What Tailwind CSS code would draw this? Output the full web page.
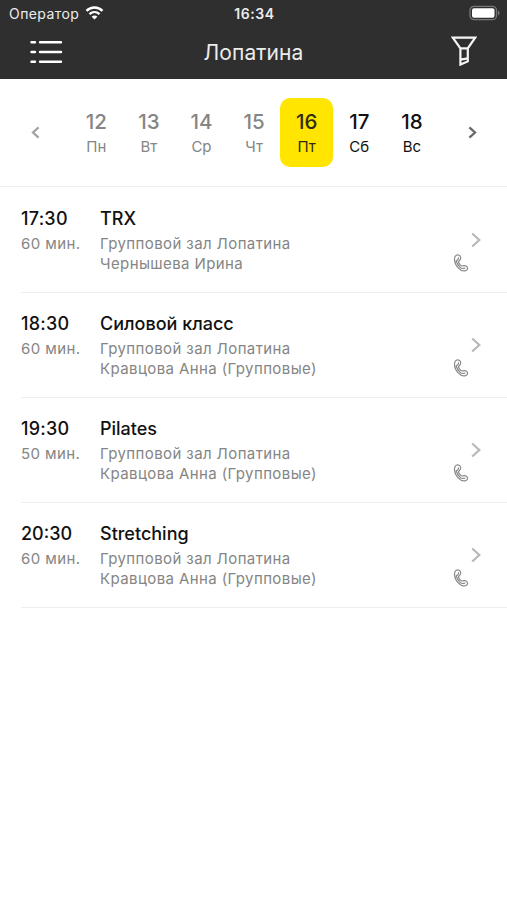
<!DOCTYPE html>
<html lang="ru">
<head>
    <meta charset="UTF-8">
    <meta name="viewport" content="width=device-width, initial-scale=1.0">
    <title>Лопатина</title>
    <script src="https://cdn.jsdelivr.net/npm/@tailwindcss/browser@4"></script>
</head>
<body class="bg-white font-['Inter',sans-serif] h-[900px] overflow-hidden">

    <!-- Shared icons -->
    <svg class="hidden">
        <symbol id="chevron" viewBox="0 0 10 16">
            <path d="M1.2 1.5 8.3 8 1.2 14.5" fill="none" stroke="currentColor" stroke-width="2.2"/>
        </symbol>
        <symbol id="chevron-bold" viewBox="0 0 9 13">
            <path d="M1.4 1.4 7 6.5 1.4 11.6" fill="none" stroke="currentColor" stroke-width="2.3"/>
        </symbol>
        <symbol id="phone" viewBox="0 0 16 18">
            <path d="M3.2 1.3C5.2.2 7.6 1.6 7.7 3.8 7.8 5.4 6.9 6.3 6 7 5.3 7.6 5.5 8.4 6.1 9.3L7.5 11.1C8.2 11.9 8.9 12.2 9.8 11.9 11.6 11.3 13.5 11.8 14.3 13.2 15 14.5 14.3 16 12.6 16.6 10 17.4 7.3 16.2 5.2 13.9 2.9 11.4 1.6 8.4 1.5 5.4 1.4 3.4 2 2 3.2 1.3ZM3 6.6C5 6.3 5.8 5 5.3 3.4M3.2 7C4 9.6 5.4 11.8 7.4 13.6 8.6 14.8 10.6 14.6 12.3 14" fill="none" stroke="currentColor" stroke-width="1.2"/>
        </symbol>
    </svg>

    <!-- Header -->
    <header class="h-[79px] bg-[#2f2f2f] text-[#ececec]">
        <div class="grid grid-cols-3 items-center h-[28px] pl-[9px] pr-[7px]">
            <div class="flex items-center gap-[6px]">
                <span class="text-[14px] tracking-[0.42px] -mt-[2px]">Оператор</span>
                <svg class="w-[19px] h-[14px] -mt-[2px] text-white" viewBox="0 0 18 14" fill="none" stroke="currentColor" stroke-width="2.4">
                    <path d="M1 4.8C5.6.4 12.4.4 17 4.8"/>
                    <path d="M4 8.1c2.9-2.7 7.1-2.7 10 0"/>
                    <path d="M9 13.6 6.1 10.7c1.6-1.5 4.2-1.5 5.8 0Z" fill="currentColor" stroke="none"/>
                </svg>
            </div>
            <span class="text-[14px] font-semibold text-center tracking-[0.6px] -mt-[2px]">16:34</span>
            <svg class="w-[31px] h-[16px] -mt-[2px] justify-self-end" viewBox="0 0 31 16">
                <rect x="1" y="1.3" width="26.5" height="13.4" rx="4" fill="none" stroke="#777" stroke-width="1.3"/>
                <rect x="3" y="3.2" width="22.5" height="9.6" rx="2" fill="#fff"/>
                <path d="M29 5.5v5c2-.9 2-4.1 0-5Z" fill="#777"/>
            </svg>
        </div>
        <div class="grid grid-cols-3 items-center h-[48px] pl-[30px] pr-[30px]">
            <svg class="w-[33px] h-[24px]" viewBox="0 0 33 24" stroke="#fff" stroke-width="2.4" stroke-linecap="round">
                <path d="M1.5 2.2H5M10 2.2H31M1.5 12H5M10 12H31M1.5 21.8H5M10 21.8H31"/>
            </svg>
            <h1 class="text-[21px] text-center whitespace-nowrap pt-px tracking-[0.1px]">Лопатина</h1>
            <svg class="w-[26px] h-[30px] -mt-[2px] justify-self-end" viewBox="0 0 26 30" fill="none" stroke="#f5f5f5" stroke-width="2.2">
                <path d="M1.8 1.6H24.2L16.8 12.4V25.4L9.4 28.6V12.4ZM9.4 12.4H16.8M9.4 23.6 16.8 22.4"/>
            </svg>
        </div>
    </header>

    <!-- Week picker -->
    <nav class="flex items-center h-[108px] pl-[31px] pr-[30px] border-b border-[#efefef]">
        <button class="w-[39px] text-[#a3a3a3]">
            <svg class="w-[9px] h-[13px] rotate-180"><use href="#chevron-bold"/></svg>
        </button>
        <ul class="flex flex-1 text-center text-[#858585]">
            <li class="w-[52.6px] h-[69px] pt-[10px]">
                <div class="text-[20.5px] leading-[27px] font-medium">12</div>
                <div class="text-[15px] leading-[24px]">Пн</div>
            </li>
            <li class="w-[52.6px] h-[69px] pt-[10px]">
                <div class="text-[20.5px] leading-[27px] font-medium">13</div>
                <div class="text-[15px] leading-[24px]">Вт</div>
            </li>
            <li class="w-[52.6px] h-[69px] pt-[10px]">
                <div class="text-[20.5px] leading-[27px] font-medium">14</div>
                <div class="text-[15px] leading-[24px]">Ср</div>
            </li>
            <li class="w-[52.6px] h-[69px] pt-[10px]">
                <div class="text-[20.5px] leading-[27px] font-medium">15</div>
                <div class="text-[15px] leading-[24px]">Чт</div>
            </li>
            <li class="w-[52.6px] h-[69px] pt-[10px] rounded-[10px] bg-[#ffe500] text-[#2e2b12]">
                <div class="text-[20.5px] leading-[27px] font-medium">16</div>
                <div class="text-[15px] leading-[24px]">Пт</div>
            </li>
            <li class="w-[52.6px] h-[69px] pt-[10px] text-[#111]">
                <div class="text-[20.5px] leading-[27px] font-medium">17</div>
                <div class="text-[15px] leading-[24px]">Сб</div>
            </li>
            <li class="w-[52.6px] h-[69px] pt-[10px] text-[#111]">
                <div class="text-[20.5px] leading-[27px] font-medium">18</div>
                <div class="text-[15px] leading-[24px]">Вс</div>
            </li>
        </ul>
        <button class="text-[#686868]">
            <svg class="w-[9px] h-[13px]"><use href="#chevron-bold"/></svg>
        </button>
    </nav>

    <!-- Classes -->
    <main class="pt-px pl-[21px] text-[15px] leading-[19.5px] text-[#858585]">
        <article class="flex h-[105px] pt-[19px] border-b border-[#efefef]">
            <div class="w-[79px]">
                <div class="text-[18px] leading-[24px] font-medium tracking-[0.25px] text-[#111]">17:30</div>
                <div class="mt-[3px] tracking-[0.42px]">60 мин.</div>
            </div>
            <div class="flex-1">
                <h2 class="text-[18px] leading-[24px] font-medium text-[#111]">TRX</h2>
                <p class="mt-[3px] tracking-[0.4px]">Групповой зал Лопатина<br>Чернышева Ирина</p>
            </div>
            <div class="flex flex-col w-[54px] pt-[25px]">
                <svg class="w-[10px] h-[16px] ml-[18px] text-[#b8b8b8]"><use href="#chevron"/></svg>
                <svg class="w-[16px] h-[18px] mt-[6px] text-[#888]"><use href="#phone"/></svg>
            </div>
        </article>
        <article class="flex h-[105px] pt-[19px] border-b border-[#efefef]">
            <div class="w-[79px]">
                <div class="text-[18px] leading-[24px] font-medium tracking-[0.25px] text-[#111]">18:30</div>
                <div class="mt-[3px] tracking-[0.42px]">60 мин.</div>
            </div>
            <div class="flex-1">
                <h2 class="text-[18px] leading-[24px] font-medium text-[#111]">Силовой класс</h2>
                <p class="mt-[3px] tracking-[0.4px]">Групповой зал Лопатина<br>Кравцова Анна (Групповые)</p>
            </div>
            <div class="flex flex-col w-[54px] pt-[25px]">
                <svg class="w-[10px] h-[16px] ml-[18px] text-[#b8b8b8]"><use href="#chevron"/></svg>
                <svg class="w-[16px] h-[18px] mt-[6px] text-[#888]"><use href="#phone"/></svg>
            </div>
        </article>
        <article class="flex h-[105px] pt-[19px] border-b border-[#efefef]">
            <div class="w-[79px]">
                <div class="text-[18px] leading-[24px] font-medium tracking-[0.25px] text-[#111]">19:30</div>
                <div class="mt-[3px] tracking-[0.42px]">50 мин.</div>
            </div>
            <div class="flex-1">
                <h2 class="text-[18px] leading-[24px] font-medium text-[#111]">Pilates</h2>
                <p class="mt-[3px] tracking-[0.4px]">Групповой зал Лопатина<br>Кравцова Анна (Групповые)</p>
            </div>
            <div class="flex flex-col w-[54px] pt-[25px]">
                <svg class="w-[10px] h-[16px] ml-[18px] text-[#b8b8b8]"><use href="#chevron"/></svg>
                <svg class="w-[16px] h-[18px] mt-[6px] text-[#888]"><use href="#phone"/></svg>
            </div>
        </article>
        <article class="flex h-[105px] pt-[19px] border-b border-[#efefef]">
            <div class="w-[79px]">
                <div class="text-[18px] leading-[24px] font-medium text-[#111]">20:30</div>
                <div class="mt-[3px] tracking-[0.42px]">60 мин.</div>
            </div>
            <div class="flex-1">
                <h2 class="text-[18px] leading-[24px] font-medium text-[#111]">Stretching</h2>
                <p class="mt-[3px] tracking-[0.4px]">Групповой зал Лопатина<br>Кравцова Анна (Групповые)</p>
            </div>
            <div class="flex flex-col w-[54px] pt-[25px]">
                <svg class="w-[10px] h-[16px] ml-[18px] text-[#b8b8b8]"><use href="#chevron"/></svg>
                <svg class="w-[16px] h-[18px] mt-[6px] text-[#888]"><use href="#phone"/></svg>
            </div>
        </article>
    </main>

</body>
</html>
